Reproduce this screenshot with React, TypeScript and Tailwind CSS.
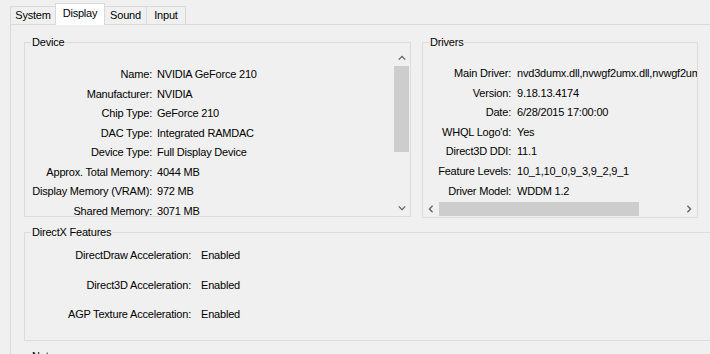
import React from 'react';

const deviceRows: [string, string][] = [
    ['Name:', 'NVIDIA GeForce 210'],
    ['Manufacturer:', 'NVIDIA'],
    ['Chip Type:', 'GeForce 210'],
    ['DAC Type:', 'Integrated RAMDAC'],
    ['Device Type:', 'Full Display Device'],
    ['Approx. Total Memory:', '4044 MB'],
    ['Display Memory (VRAM):', '972 MB'],
    ['Shared Memory:', '3071 MB'],
];

const driverRows: [string, string][] = [
    ['Main Driver:', 'nvd3dumx.dll,nvwgf2umx.dll,nvwgf2umx.dll,nvwgf2um'],
    ['Version:', '9.18.13.4174'],
    ['Date:', '6/28/2015 17:00:00'],
    ["WHQL Logo'd:", 'Yes'],
    ['Direct3D DDI:', '11.1'],
    ['Feature Levels:', '10_1,10_0,9_3,9_2,9_1'],
    ['Driver Model:', 'WDDM 1.2'],
];

const featureRows: [string, string][] = [
    ['DirectDraw Acceleration:', 'Enabled'],
    ['Direct3D Acceleration:', 'Enabled'],
    ['AGP Texture Acceleration:', 'Enabled'],
];

const Chevron = ({ dir }: { dir: 'up' | 'down' | 'left' | 'right' }) => {
    const d = {
        up: 'M0.8 4.6 L4 1.4 L7.2 4.6',
        down: 'M0.8 1.4 L4 4.6 L7.2 1.4',
        left: 'M4.6 0.8 L1.4 4 L4.6 7.2',
        right: 'M1.4 0.8 L4.6 4 L1.4 7.2',
    }[dir];
    const vertical = dir === 'up' || dir === 'down';
    return (
        <svg width={vertical ? 8 : 6} height={vertical ? 6 : 8} viewBox={vertical ? '0 0 8 6' : '0 0 6 8'}>
            <path d={d} fill="none" stroke="#606060" strokeWidth="1.3" />
        </svg>
    );
};

const Tab = ({ label, active, first, w }: { label: string; active?: boolean; first?: boolean; w: string }) => (
    <div
        className={`${w} ${first ? '' : '-ml-px'} ${active
            ? 'relative z-10 h-[22px] -mb-px bg-white pb-[2px]'
            : 'h-[18px] bg-[#f0f0f0]'} flex items-center justify-center border-l border-t border-r border-[#d9d9d9] text-black`}
    >
        {label}
    </div>
);

export default function App() {
    return (
        <div className="h-[354px] w-[710px] overflow-hidden bg-[#f0f0f0] font-['Liberation_Sans',Arial,sans-serif] text-[11px] tracking-[-0.2px] text-black">
            {/* tab strip */}
            <div className="flex h-[24px] items-end pl-[10px]">
                <Tab label="System" first w="w-[46px]" />
                <Tab label="Display" active w="w-[50px]" />
                <Tab label="Sound" w="w-[43px]" />
                <Tab label="Input" w="w-[40px]" />
            </div>

            {/* tab page */}
            <div className="ml-[10px] border-l border-t border-[#d9d9d9] pl-[13px] pt-[10px]">
                <div className="flex items-start gap-[11px]">
                    {/* Device */}
                    <fieldset className="w-[387px] min-w-0 border border-[#dcdcdc]">
                        <legend className="ml-[6px] px-[1px] leading-[14px]">Device</legend>
                        <div className="mt-[1px] flex h-[166px]">
                            <div className="flex-1 overflow-hidden pt-[15px]">
                                <div className="grid grid-cols-[127px_1fr] gap-x-[5px] leading-[19.5px]">
                                    {deviceRows.map(([k, v]) => (
                                        <React.Fragment key={k}>
                                            <div className="text-right whitespace-nowrap">{k}</div>
                                            <div className="whitespace-nowrap">{v}</div>
                                        </React.Fragment>
                                    ))}
                                </div>
                            </div>
                            <div className="flex w-[17px] flex-col">
                                <div className="flex h-[16px] items-center justify-center"><Chevron dir="up" /></div>
                                <div className="mx-px h-[86px] bg-[#cdcdcd]" />
                                <div className="flex-1" />
                                <div className="flex h-[16px] items-center justify-center"><Chevron dir="down" /></div>
                            </div>
                        </div>
                    </fieldset>

                    {/* Drivers */}
                    <fieldset className="w-[276px] min-w-0 border border-[#dcdcdc]">
                        <legend className="ml-[6px] px-[1px] leading-[14px]">Drivers</legend>
                        <div className="overflow-hidden pt-[15px]">
                            <div className="grid grid-cols-[88px_1fr] gap-x-[6px] leading-[19.6px]">
                                {driverRows.map(([k, v]) => (
                                    <React.Fragment key={k}>
                                        <div className="text-right whitespace-nowrap">{k}</div>
                                        <div className="overflow-hidden whitespace-nowrap">{v}</div>
                                    </React.Fragment>
                                ))}
                            </div>
                        </div>
                        <div className="flex h-[16px] items-stretch">
                            <div className="flex w-[16px] items-center justify-center"><Chevron dir="left" /></div>
                            <div className="my-px w-[200px] bg-[#cdcdcd]" />
                            <div className="flex-1" />
                            <div className="flex w-[16px] items-center justify-center"><Chevron dir="right" /></div>
                        </div>
                    </fieldset>
                </div>

                {/* DirectX Features */}
                <fieldset className="mt-[7px] w-[700px] min-w-0 border border-[#dcdcdc] pb-[10px]">
                    <legend className="ml-[6px] px-[1px] leading-[14px]">DirectX Features</legend>
                    <div className="grid grid-cols-[166px_1fr] gap-x-[10px] pt-[2px] leading-[29.6px]">
                        {featureRows.map(([k, v]) => (
                            <React.Fragment key={k}>
                                <div className="text-right whitespace-nowrap">{k}</div>
                                <div className="whitespace-nowrap">{v}</div>
                            </React.Fragment>
                        ))}
                    </div>
                </fieldset>

                {/* Notes */}
                <fieldset className="mt-[8px] h-[60px] w-[700px] min-w-0 border border-[#dcdcdc]">
                    <legend className="ml-[6px] px-[1px] leading-[14px]">Notes</legend>
                </fieldset>
            </div>
        </div>
    );
}
